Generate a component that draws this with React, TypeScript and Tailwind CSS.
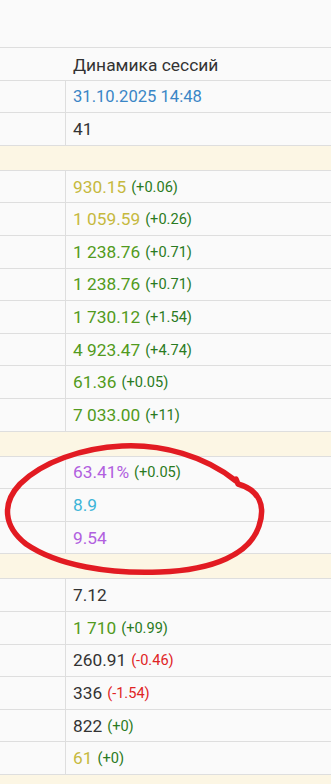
import React from "react";

type Tone = "dark" | "blue" | "yellow" | "green" | "purple" | "cyan";
type Row =
  | { kind: "gap" }
  | { kind: "row"; value: string; tone: Tone; delta?: string; down?: boolean; small?: boolean };

const toneClass: Record<Tone, string> = {
  dark: "text-[#333333]",
  blue: "text-[#3a86c6]",
  yellow: "text-[#c6b93e]",
  green: "text-[#529a20]",
  purple: "text-[#b160df]",
  cyan: "text-[#3eb5d8]",
};

const rows: Row[] = [
  { kind: "row", value: "31.10.2025 14:48", tone: "blue", small: true },
  { kind: "row", value: "41", tone: "dark" },
  { kind: "gap" },
  { kind: "row", value: "930.15", tone: "yellow", delta: "(+0.06)" },
  { kind: "row", value: "1 059.59", tone: "yellow", delta: "(+0.26)" },
  { kind: "row", value: "1 238.76", tone: "green", delta: "(+0.71)" },
  { kind: "row", value: "1 238.76", tone: "green", delta: "(+0.71)" },
  { kind: "row", value: "1 730.12", tone: "green", delta: "(+1.54)" },
  { kind: "row", value: "4 923.47", tone: "green", delta: "(+4.74)" },
  { kind: "row", value: "61.36", tone: "green", delta: "(+0.05)" },
  { kind: "row", value: "7 033.00", tone: "green", delta: "(+11)" },
  { kind: "gap" },
  { kind: "row", value: "63.41%", tone: "purple", delta: "(+0.05)" },
  { kind: "row", value: "8.9", tone: "cyan" },
  { kind: "row", value: "9.54", tone: "purple" },
  { kind: "gap" },
  { kind: "row", value: "7.12", tone: "dark" },
  { kind: "row", value: "1 710", tone: "green", delta: "(+0.99)" },
  { kind: "row", value: "260.91", tone: "dark", delta: "(-0.46)", down: true },
  { kind: "row", value: "336", tone: "dark", delta: "(-1.54)", down: true },
  { kind: "row", value: "822", tone: "dark", delta: "(+0)" },
  { kind: "row", value: "61", tone: "yellow", delta: "(+0)" },
  { kind: "gap" },
];

function DataRow({ row }: { row: Row }) {
  if (row.kind === "gap") {
    return <div className="h-[25px] border-b border-[#dedede] bg-[#fcf6e4]" />;
  }
  return (
    <div className="grid h-[32.6px] grid-cols-[66px_1fr] border-b border-[#dedede]">
      <div className="border-r border-[#dedede]" />
      <div className="flex items-center whitespace-nowrap pl-[7px] pt-[2px]">
        <span className={`${row.small ? "text-[16.6px]" : "text-[17.3px]"} ${toneClass[row.tone]}`}>
          {row.value}
        </span>
        {row.delta && (
          <span
            className={`ml-[5px] text-[14.6px] ${row.down ? "text-[#e02424]" : "text-[#2a7a22]"}`}
          >
            {row.delta}
          </span>
        )}
      </div>
    </div>
  );
}

// hand-drawn marker around the three rows
function RedLoop() {
  return (
    <svg
      className="pointer-events-none absolute left-0 top-0"
      width="331"
      height="784"
      viewBox="0 0 331 784"
      fill="none"
    >
      <path
        d="M236 481 C205 456 162 444 122 446 C82 448 42 462 20 484 C2 503 3 526 26 544 C58 566 110 574 160 572 C214 570 250 554 259 526 C266 505 259 490 238 484 L236 479"
        stroke="#e21b22"
        strokeWidth="5.5"
        strokeLinecap="round"
        strokeLinejoin="round"
      />
    </svg>
  );
}

export default function App() {
  return (
    <div className="relative h-[784px] w-[331px] overflow-hidden bg-[#fafafa] font-['Roboto',sans-serif]">
      <div className="h-[47px]" />
      <div className="border-t border-[#dedede]">
        <div className="flex h-[32.6px] items-center border-b border-[#dedede] pl-[73px] pt-[2px] text-[17.4px] text-[#333333]">
          Динамика сессий
        </div>
        {rows.map((r, i) => (
          <DataRow key={i} row={r} />
        ))}
      </div>
      <RedLoop />
    </div>
  );
}
